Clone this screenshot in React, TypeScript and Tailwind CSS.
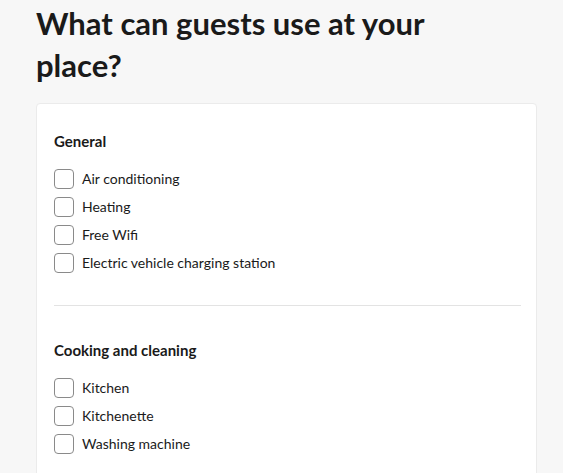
const sections = [
  {
    title: "General",
    items: ["Air conditioning", "Heating", "Free Wifi", "Electric vehicle charging station"],
  },
  {
    title: "Cooking and cleaning",
    items: ["Kitchen", "Kitchenette", "Washing machine"],
  },
];

export default function App() {
  return (
    <div
      className="min-h-[473px] bg-[#f7f7f7] px-9 pt-[2px] text-[#1a1a1a]"
      style={{ fontFamily: 'Lato, "Noto Sans", sans-serif' }}
    >
      <h1 className="max-w-[440px] text-[31px] font-bold leading-[42px]">
        What can guests use at your place?
      </h1>

      <div className="mt-[17px] w-[501px] rounded-[4px] border border-[#ebebeb] bg-white pl-[17px] pr-[15px] pt-[27px] pb-10">
        {sections.map((s, i) => (
          <div key={s.title}>
            {i > 0 && <hr className="mt-8 mb-[34px] border-[#e3e3e3]" />}
            <h2 className="text-[15px] font-bold leading-5">{s.title}</h2>
            <div className="mt-[18px] flex flex-col gap-2">
              {s.items.map((item) => (
                <label key={item} className="flex items-center gap-2 text-sm leading-5">
                  <span className="h-5 w-5 shrink-0 rounded-[4px] border border-[#8a8a8a] bg-white" />
                  {item}
                </label>
              ))}
            </div>
          </div>
        ))}
      </div>
    </div>
  );
}
